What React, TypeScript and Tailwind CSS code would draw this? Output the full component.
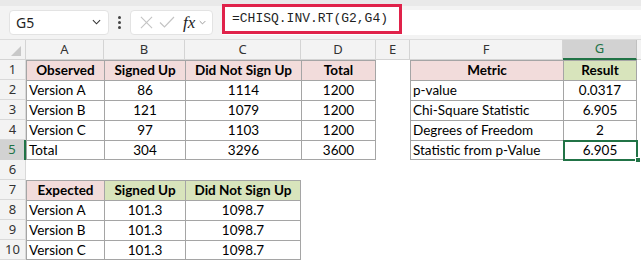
import React from 'react'

type Cell = {
	t?: string
	fill?: 'pink' | 'green'
	b?: boolean
	al?: 'l' | 'c'
}

const P = 'pink'
const G = 'green'

// rows 1..10, columns A..G
const rows: Cell[][] = [
	[
		{ t: 'Observed', fill: P, b: true, al: 'c' },
		{ t: 'Signed Up', fill: P, b: true, al: 'c' },
		{ t: 'Did Not Sign Up', fill: P, b: true, al: 'c' },
		{ t: 'Total', fill: P, b: true, al: 'c' },
		{},
		{ t: 'Metric', fill: P, b: true, al: 'c' },
		{ t: 'Result', fill: G, b: true, al: 'c' }
	],
	[{ t: 'Version A' }, { t: '86', al: 'c' }, { t: '1114', al: 'c' }, { t: '1200', al: 'c' }, {}, { t: 'p-value' }, { t: '0.0317', al: 'c' }],
	[{ t: 'Version B' }, { t: '121', al: 'c' }, { t: '1079', al: 'c' }, { t: '1200', al: 'c' }, {}, { t: 'Chi-Square Statistic' }, { t: '6.905', al: 'c' }],
	[{ t: 'Version C' }, { t: '97', al: 'c' }, { t: '1103', al: 'c' }, { t: '1200', al: 'c' }, {}, { t: 'Degrees of Freedom' }, { t: '2', al: 'c' }],
	[{ t: 'Total' }, { t: '304', al: 'c' }, { t: '3296', al: 'c' }, { t: '3600', al: 'c' }, {}, { t: 'Statistic from p-Value' }, { t: '6.905', al: 'c' }],
	[{}, {}, {}, {}, {}, {}, {}],
	[
		{ t: 'Expected', fill: P, b: true, al: 'c' },
		{ t: 'Signed Up', fill: G, b: true, al: 'c' },
		{ t: 'Did Not Sign Up', fill: G, b: true, al: 'c' },
		{},
		{},
		{},
		{}
	],
	[{ t: 'Version A' }, { t: '101.3', al: 'c' }, { t: '1098.7', al: 'c' }, {}, {}, {}, {}],
	[{ t: 'Version B' }, { t: '101.3', al: 'c' }, { t: '1098.7', al: 'c' }, {}, {}, {}, {}],
	[{ t: 'Version C' }, { t: '101.3', al: 'c' }, { t: '1098.7', al: 'c' }, {}, {}, {}, {}]
]

// bordered ranges: [rowFrom, rowTo, colFrom, colTo]
const tables = [
	[1, 5, 1, 4],
	[1, 5, 6, 7],
	[7, 10, 1, 3]
]

function borders(r: number, c: number) {
	for (const [r0, r1, c0, c1] of tables) {
		if (r >= r0 && r <= r1 && c >= c0 && c <= c1) {
			let cls = 'border-t border-l border-[#a5a5a5]'
			if (r === r1) cls += ' border-b'
			if (c === c1) cls += ' border-r'
			return cls
		}
	}
	return ''
}

const letters = ['A', 'B', 'C', 'D', 'E', 'F', 'G']

function Chevron({ className }: { className: string }) {
	return (
		<svg viewBox="0 0 10 6" className={className} fill="none" stroke="currentColor" strokeWidth="1.2">
			<path d="M1 1l4 4 4-4" />
		</svg>
	)
}

function Toolbar() {
	return (
		<div className="relative h-[40px] bg-[#f3f3f3] border-b border-[#dcdcdc]">
			<div className="h-[6px] bg-[#e9e9e9]" />
			<div className="flex items-center h-[26px] mt-[3px] pl-[9px]">
				<div className="flex items-center w-[100px] h-[25px] bg-white rounded-[4px] border border-[#e3e3e3] pl-[6px] pr-[7px] font-['Noto_Sans'] text-[14px] text-[#1f1f1f]">
					<span className="flex-1">G5</span>
					<Chevron className="w-[9px] h-[6px] text-[#333]" />
				</div>
				<div className="flex flex-col gap-[2px] mx-[9px]">
					<span className="w-[3px] h-[3px] bg-[#444] rounded-full" />
					<span className="w-[3px] h-[3px] bg-[#444] rounded-full" />
					<span className="w-[3px] h-[3px] bg-[#444] rounded-full" />
				</div>
				<div className="flex items-center w-[83px] h-[25px] bg-white rounded-[4px] border border-[#e3e3e3] pl-[9px]">
					<svg viewBox="0 0 14 14" className="w-[13px] h-[13px]" fill="none" stroke="#c4c4c4" strokeWidth="1.2">
						<path d="M1 1l12 12M13 1L1 13" />
					</svg>
					<svg viewBox="0 0 16 12" className="w-[16px] h-[12px] ml-[6px]" fill="none" stroke="#c4c4c4" strokeWidth="1.2">
						<path d="M1 6.5l4.5 4.5L15 1" />
					</svg>
					<span className="ml-[8px] font-['Liberation_Serif'] italic text-[17px] leading-none text-[#222]">fx</span>
					<Chevron className="w-[7px] h-[5px] ml-[4px] text-[#888]" />
				</div>
				<div className="flex-1 h-[25px] ml-[9px] bg-white" />
			</div>
			<div className="absolute left-[222px] top-[4px] w-[180px] h-[30px] border-[3px] border-[#e0224a] bg-white flex items-center pl-[7px] font-['Liberation_Mono'] text-[13px] text-[#1f1f1f]">
				=CHISQ.INV.RT(G2,G4)
			</div>
		</div>
	)
}

export default function App() {
	return (
		<div className="w-[641px] h-[262px] overflow-hidden bg-white">
			<Toolbar />
			<div className="relative grid grid-cols-[26px_78px_81px_116px_75px_34px_153px_74px_4px] auto-rows-[20px] font-['Lato'] text-[13.5px] text-black">
				{/* column headers */}
				<div className="relative bg-[#f3f3f3] border-r border-b border-[#d4d4d4]">
					<svg viewBox="0 0 10 10" className="absolute right-[4px] bottom-[3px] w-[10px] h-[10px]">
						<path d="M10 0V10H0Z" fill="#c8c8c8" />
					</svg>
				</div>
				{letters.map(l =>
					l === 'G' ? (
						<div key={l} className="flex items-center justify-center bg-[#d2d2d2] border-r border-[#c0c0c0] border-b-2 border-b-[#217346] font-['Noto_Sans'] text-[13px] text-[#217346]">
							{l}
						</div>
					) : (
						<div key={l} className="flex items-center justify-center bg-[#f3f3f3] border-r border-b border-[#d4d4d4] font-['Noto_Sans'] text-[13px] text-[#333]">
							{l}
						</div>
					)
				)}
				<div className="bg-[#f3f3f3] border-b border-[#d4d4d4]" />

				{rows.map((row, ri) => {
					const r = ri + 1
					return (
						<React.Fragment key={r}>
							{r === 5 ? (
								<div className="flex items-center justify-center bg-[#d2d2d2] border-r-2 border-[#217346] font-['Noto_Sans'] text-[13px] text-[#217346]">
									{r}
								</div>
							) : (
								<div className="flex items-center justify-center bg-[#f3f3f3] border-r border-b border-[#d9d9d9] font-['Noto_Sans'] text-[13px] text-[#333]">
									{r}
								</div>
							)}
							{row.map((cell, ci) => (
								<div
									key={ci}
									className={`flex items-center px-[2px] whitespace-nowrap overflow-hidden ${borders(r, ci + 1)} ${
										cell.fill === 'pink' ? 'bg-[#f2dcdb]' : cell.fill === 'green' ? 'bg-[#d8e4bc]' : ''
									} ${cell.b ? 'font-bold' : ''} ${cell.al === 'c' ? 'justify-center' : 'justify-start'}`}>
									{cell.t}
								</div>
							))}
							<div />
						</React.Fragment>
					)
				})}

				{/* selected cell G5 */}
				<div className="absolute left-[563px] top-[100px] w-[75px] h-[21px] border-2 border-[#217346]" />
				<div className="absolute left-[635px] top-[117px] w-[6px] h-[6px] bg-[#217346] border border-white" />
			</div>
		</div>
	)
}
